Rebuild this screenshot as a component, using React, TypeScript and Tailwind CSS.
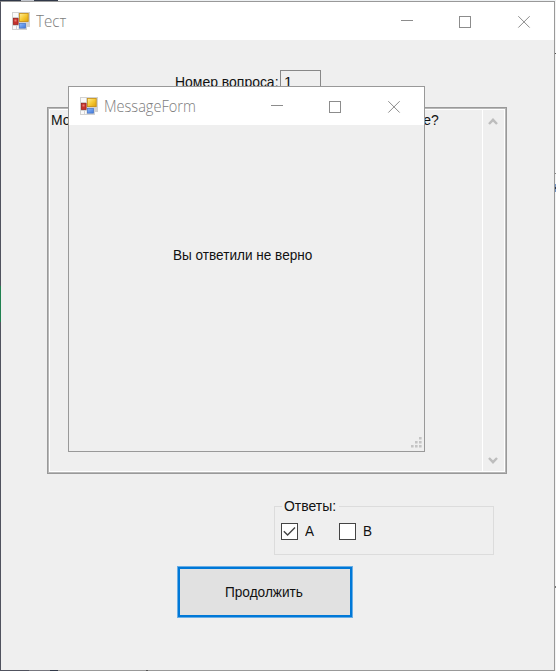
import React from "react";

const uiFont = "font-['Liberation_Sans',sans-serif] text-[15px] leading-[18px] text-[#111] whitespace-nowrap";
const titleFont = "ml-[6px] flex-1 font-['Open_Sans',sans-serif] text-[15.5px] font-light leading-5 text-[#7c7c7c]";

function FormIcon() {
  return (
    <svg width="18" height="18" viewBox="0 0 18 18" className="shrink-0">
      <defs>
        <linearGradient id="gold" x1="0" y1="0" x2="1" y2="1">
          <stop offset="0" stopColor="#fff0a0" />
          <stop offset=".5" stopColor="#f6ca35" />
          <stop offset="1" stopColor="#dda00c" />
        </linearGradient>
        <linearGradient id="sky" x1="0" y1="0" x2="1" y2="1">
          <stop offset="0" stopColor="#8db9fa" />
          <stop offset="1" stopColor="#3f78dc" />
        </linearGradient>
      </defs>
      <path d="M0 0H18V15H15V18H0Z" fill="#d2d2d2" />
      <path d="M1 1H6V5H1ZM1 14H4V17H1ZM5 14H6.5V17H5Z" fill="#fafafa" />
      <rect x="7.4" y="1.4" width="8.8" height="8.2" fill="url(#gold)" stroke="#c68e12" strokeWidth=".8" />
      <rect x="1.3" y="6.3" width="4.8" height="6.2" fill="#c6322c" stroke="#951b18" strokeWidth=".7" />
      <rect x="2.5" y="7.5" width="2" height="2" fill="#e87a70" />
      <rect x="7.4" y="11.4" width="6.2" height="4.7" fill="url(#sky)" stroke="#4877c8" strokeWidth=".7" />
    </svg>
  );
}

function Controls() {
  return (
    <svg width="130" height="13" viewBox="0 0 130 13" fill="none" stroke="#8c8c8c" className="shrink-0">
      <path d="M0 5.5H12M58.5 1.5H69.5V12.5H58.5Z" shapeRendering="crispEdges" />
      <path d="M117.3 1.2L128.7 12.6M128.7 1.2L117.3 12.6" />
    </svg>
  );
}

function CheckBox({ label, checked }: { label: string; checked?: boolean }) {
  return (
    <div className="flex items-center gap-[7px]">
      <div className="h-[17px] w-[17px] border-[1.5px] border-[#444] bg-white">
        {checked && (
          <svg width="15" height="15" viewBox="0 0 15 15" fill="none" stroke="#444" strokeWidth="1.4">
            <path d="M1.8 7.2L5.6 11L13 3.6" />
          </svg>
        )}
      </div>
      <span className={uiFont}>
        <span className="inline-block origin-left scale-x-[0.9]">{label}</span>
      </span>
    </div>
  );
}

function MessageWindow() {
  return (
    <section className="absolute left-[68px] top-[86px] flex h-[366px] w-[357px] flex-col border border-[#999] bg-[#efefef]">
      <header className="flex h-[38px] shrink-0 items-center bg-white pl-[11px] pr-[23px]">
        <FormIcon />
        <span className={titleFont}>
          <span className="inline-block origin-left scale-x-[0.94]">MessageForm</span>
        </span>
        <Controls />
      </header>
      <p className={`ml-[104px] mt-[121px] w-fit origin-left scale-x-[0.905] ${uiFont}`}>Вы ответили не верно</p>
      <svg width="11" height="11" viewBox="0 0 11 11" fill="#c4c4c4" className="mb-[3px] ml-auto mr-[2px] mt-auto">
        <path d="M8 0h2.6v2.6h-2.6zM4 4h2.6v2.6h-2.6zM8 4h2.6v2.6h-2.6zM0 8h2.6v2.6h-2.6zM4 8h2.6v2.6h-2.6zM8 8h2.6v2.6h-2.6z" />
      </svg>
    </section>
  );
}

export default function App() {
  return (
    <div className="relative h-[671px] w-[556px] overflow-hidden bg-[#f4f4f4]">
      <div className="flex h-px">
        <div className="w-[21px] bg-[#303848]" />
        <div className="w-[13px] bg-[#c4c8d0]" />
        <div className="w-[24px] bg-[#303848]" />
        <div className="flex-1 bg-[#eef1f3]" />
      </div>
      <main className="flex h-[670px] w-[555px] flex-col border border-[#999] border-l-[#50525e] bg-[#efefef]">
        <header className="flex h-[38px] shrink-0 items-center bg-white pl-[11px] pr-[23px]">
          <FormIcon />
          <span className={titleFont}>
            <span className="inline-block origin-left scale-x-[0.98]">Тест</span>
          </span>
          <Controls />
        </header>

        <div className="ml-[174px] mt-[30px] flex h-[25px] shrink-0 items-start">
          <div className={`mt-[3px] w-[105px] ${uiFont}`}>
            <span className="inline-block origin-left scale-x-[0.93]">Номер вопроса:</span>
          </div>
          <div className={`h-[25px] w-[41px] border border-[#888] pl-[3px] pt-[2px] ${uiFont}`}>1</div>
        </div>

        <div className="ml-[46px] mt-[12px] flex h-[367px] w-[460px] shrink-0 border border-[#999]">
          <div className="flex w-full border border-[#b8b8b8]">
            <div className="flex w-full justify-between border border-white">
              <div className={`flex flex-1 justify-between pl-[1px] pr-[43px] pt-[1px] ${uiFont}`}>
                <span className="origin-left scale-x-[0.93]">Мо</span>
                <span className="origin-right scale-x-[0.93]">е?</span>
              </div>
              <div className="flex w-[22px] flex-col items-start justify-between border-l border-white pb-[6px] pl-[5px] pt-[7px]">
                <svg width="10" height="9" viewBox="0 0 10 9" fill="none" stroke="#bdbdbd" strokeWidth="2.4">
                  <path d="M1 7L5 2.8L9 7" />
                </svg>
                <svg width="10" height="9" viewBox="0 0 10 9" fill="none" stroke="#bdbdbd" strokeWidth="2.4">
                  <path d="M1 2L5 6.2L9 2" />
                </svg>
              </div>
            </div>
          </div>
        </div>

        <fieldset className="ml-[273px] mt-[23px] h-[58px] w-[220px] shrink-0 border border-[#dcdcdc] pl-[6px]">
          <legend className={`ml-[1px] h-[18px] w-[57px] px-[2px] ${uiFont}`}>
            <span className="inline-block origin-left scale-x-[0.93]">Ответы:</span>
          </legend>
          <div className="mt-[7px] flex gap-[24px]">
            <CheckBox label="A" checked />
            <CheckBox label="B" />
          </div>
        </fieldset>

        <button className={`ml-[176px] mt-[11px] h-[52px] w-[176px] shrink-0 border border-[#69aee6] bg-[#e1e1e1] shadow-[inset_0_0_0_2px_#0078d7] ${uiFont}`}>
          <span className="inline-block scale-x-[0.91] pr-[2px]">Продолжить</span>
        </button>
      </main>
      <div className="absolute left-0 top-[286px] h-9 w-px bg-[#208050]" />
      <div className="absolute left-[555px] top-[53px] h-px w-px bg-[#555]" />
      <div className="absolute left-[555px] top-[173px] h-px w-px bg-[#888]" />
      <div className="absolute left-[555px] top-[184px] h-2 w-px bg-[#7293c4]" />
      <div className="absolute left-[555px] top-[187px] h-[2px] w-px bg-[#333a4a]" />
      <div className="absolute left-[555px] top-[586px] h-[2px] w-px bg-[#777]" />
      <div className="absolute left-0 top-[670px] flex h-px w-[148px]">
        <div className="w-[29px] bg-[#50525e]" />
        <div className="w-[21px] bg-[#77777f]" />
        <div className="w-[8px] bg-[#303848]" />
        <div className="ml-auto w-[2px] bg-[#555]" />
      </div>
      <MessageWindow />
    </div>
  );
}
